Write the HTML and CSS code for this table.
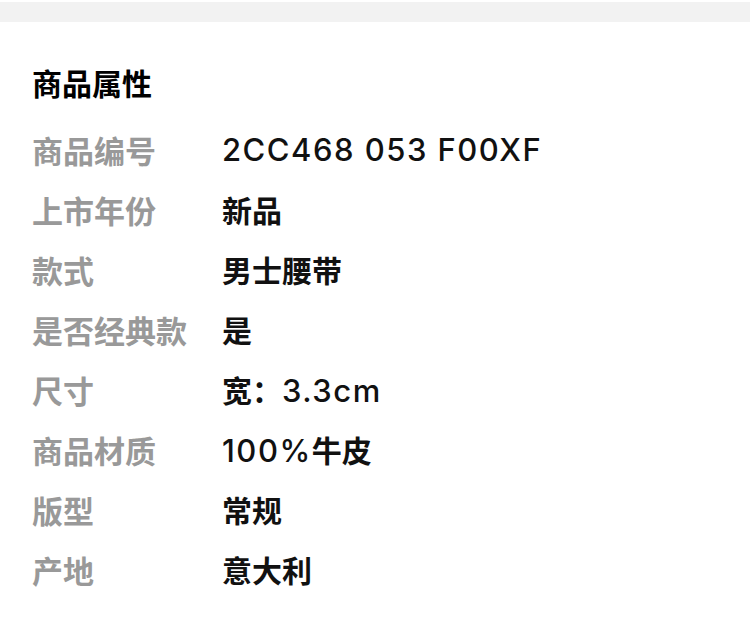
FILE: index.html
```html
<!DOCTYPE html>
<html lang="zh-CN">
<head>
    <meta charset="UTF-8">
    <title>商品属性</title>
    <link rel="stylesheet" href="styles.css">
</head>
<body>
<div class="topBar"></div>
<div class="attrs">
    <h2 class="attrsTitle">商品属性</h2>
    <ul class="attrList">
        <li><span class="attrName">商品编号</span><span class="attrValue latin">2CC468 053 F00XF</span></li>
        <li><span class="attrName">上市年份</span><span class="attrValue">新品</span></li>
        <li><span class="attrName">款式</span><span class="attrValue">男士腰带</span></li>
        <li><span class="attrName">是否经典款</span><span class="attrValue">是</span></li>
        <li><span class="attrName">尺寸</span><span class="attrValue">宽：<span class="latin">3.3cm</span></span></li>
        <li><span class="attrName">商品材质</span><span class="attrValue"><span class="latin">100%</span>牛皮</span></li>
        <li><span class="attrName">版型</span><span class="attrValue">常规</span></li>
        <li><span class="attrName">产地</span><span class="attrValue">意大利</span></li>
    </ul>
</div>
</body>
</html>
```

FILE: styles.css
```css
body{margin:0;background:#fff;font-family:"Noto Sans CJK SC","Noto Sans",sans-serif;}
.topBar{height:20px;margin-top:2px;background:#f2f2f2;}
.attrs{padding:40px 32px 30px;}
.attrsTitle{margin:0;font-size:30px;line-height:40px;font-weight:700;color:#000;}
.attrList{list-style:none;margin:17px 0 0;padding:0;}
.attrList li{display:flex;align-items:center;height:60px;}
.attrName{width:190px;flex:none;font-size:31px;font-weight:700;color:#999;}
.attrValue{font-size:30px;font-weight:700;color:#111;}
.latin{font-family:Inter,"Noto Sans",sans-serif;font-size:31px;font-weight:500;letter-spacing:1.5px;}
```
